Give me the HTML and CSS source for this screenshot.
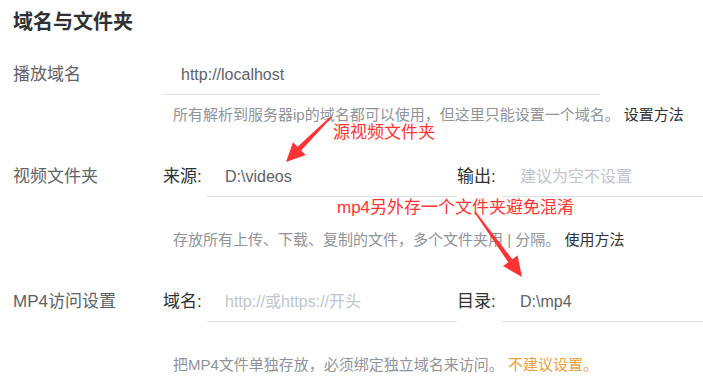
FILE: index.html
```html
<!DOCTYPE html>
<html lang="zh-CN">
<head>
<meta charset="utf-8">
<title>域名与文件夹</title>
<link rel="stylesheet" href="styles.css">
</head>
<body>
<div class="page">
  <h2 class="title">域名与文件夹</h2>

  <div class="field first">
    <div class="label">播放域名</div>
    <div class="control">
      <div class="inputs">
        <div class="input full">http://localhost</div>
      </div>
      <p class="help near">所有解析到服务器ip的域名都可以使用，但这里只能设置一个域名。 <span class="link">设置方法</span></p>
    </div>
  </div>

  <div class="field">
    <div class="label">视频文件夹</div>
    <div class="control">
      <div class="inputs">
        <span class="sub-label">来源:</span>
        <div class="input half">D:\videos</div>
        <span class="sub-label second">输出:</span>
        <div class="input rest placeholder">建议为空不设置</div>
      </div>
      <p class="help">存放所有上传、下载、复制的文件，多个文件夹用 | 分隔。 <span class="link">使用方法</span></p>
    </div>
  </div>

  <div class="field">
    <div class="label">MP4访问设置</div>
    <div class="control">
      <div class="inputs">
        <span class="sub-label">域名:</span>
        <div class="input half placeholder">http://或https://开头</div>
        <span class="sub-label second">目录:</span>
        <div class="input rest">D:\mp4</div>
      </div>
      <p class="help">把MP4文件单独存放，必须绑定独立域名来访问。 <span class="warn">不建议设置。</span></p>
    </div>
  </div>
</div>

<div class="note note-src">源视频文件夹</div>
<div class="note note-mp4">mp4另外存一个文件夹避免混淆</div>
<svg class="arrows" width="703" height="387" viewBox="0 0 703 387" aria-hidden="true">
  <polygon points="330.4,116.4 297.6,146.8 293,142.2 286,162 305.8,155 301.2,150.4 331.6,117.6" />
  <polygon points="475.6,211.5 512.3,259.3 517.6,255.5 522,277 503,266.1 508.3,262.3 474.4,212.5" />
</svg>
</body>
</html>
```

FILE: styles.css
```css
html, body {
  margin: 0;
  padding: 0;
  background: #ffffff;
}

body {
  width: 703px;
  height: 387px;
  overflow: hidden;
  position: relative;
  font-family: "Liberation Sans", "Noto Sans CJK SC", sans-serif;
  color: #606266;
}

.page {
  padding: 8px 0 0 13px;
}

.title {
  margin: 0 0 19px 0;
  font-size: 20px;
  line-height: 28px;
  font-weight: bold;
  color: #303133;
}

.field {
  display: grid;
  grid-template-columns: 150px 540px;
  margin-top: 32px;
}

.field.first {
  margin-top: 0;
}

.label {
  height: 40px;
  line-height: 40px;
  font-size: 17px;
  color: #606266;
  white-space: nowrap;
}

.control {
  display: flex;
  flex-direction: column;
}

.inputs {
  display: flex;
  align-items: stretch;
  height: 40px;
}

.sub-label {
  width: 44px;
  line-height: 40px;
  font-size: 17px;
  color: #303133;
  white-space: nowrap;
}

.sub-label.second {
  width: 45px;
}

.input {
  box-sizing: border-box;
  height: 40px;
  line-height: 39px;
  padding-left: 18px;
  font-size: 16px;
  color: #606266;
  border-bottom: 1px solid #dcdfe6;
  white-space: nowrap;
}

.input.full {
  width: 437px;
}

.input.half {
  width: 250px;
}

.input.rest {
  flex: 1;
}

.input.placeholder {
  color: #c0c4cc;
}

.help {
  margin: 33px 0 0 10px;
  font-size: 15px;
  line-height: 20px;
  color: #909399;
  white-space: nowrap;
}

.help.near {
  margin-top: 10px;
}

.link {
  color: #303133;
}

.warn {
  color: #e6a23c;
}

.note {
  position: absolute;
  font-size: 17px;
  line-height: 20px;
  color: #ff3333;
  white-space: nowrap;
}

.note-src {
  left: 333px;
  top: 123px;
}

.note-mp4 {
  left: 337px;
  top: 198px;
}

.arrows {
  position: absolute;
  left: 0;
  top: 0;
  pointer-events: none;
}

.arrows polygon {
  fill: #ff3333;
}
```
